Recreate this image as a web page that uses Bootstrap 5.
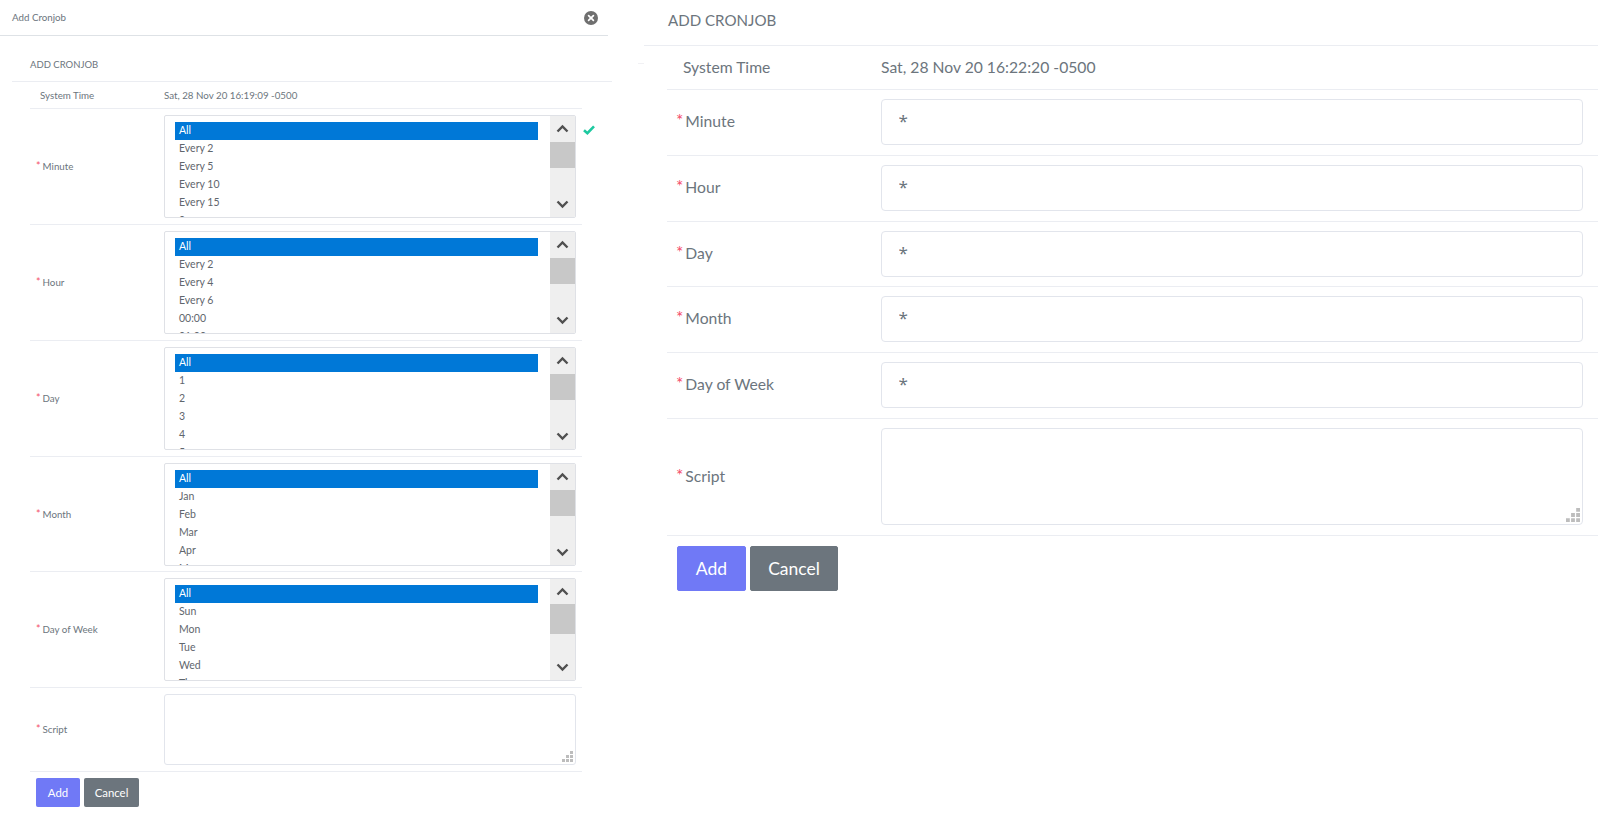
<!DOCTYPE html>
<html lang="en">
<head>
<meta charset="utf-8">
<title>Add Cronjob</title>
<link href="https://cdn.jsdelivr.net/npm/bootstrap@5.3.0/dist/css/bootstrap.min.css" rel="stylesheet">
<style>
html,body{height:813px;overflow:hidden}
body{font-family:Lato,"Noto Sans",sans-serif;color:#6c757d;background:#fff}
.shot-a{width:620px;flex:none;font-size:9.75px}
.shot-b{flex:1;min-width:0;font-size:15.7px}
.modal-bar{width:608px;height:36px;padding:0 10px 0 12px;border-bottom:1px solid #dee2e6}
.close-dot{width:14px;height:14px}
.head-a{margin:0 8px 0 12px;height:46px;padding:12px 0 0 18px;border-bottom:1px solid #ebedf2;font-size:9.5px;line-height:1}
.body-a{margin-left:30px;width:552px}
.line-a{border-bottom:1px solid #ebedf2}
.row-sys-a{height:27px}
.lab-a{width:134px;flex:none;padding-left:6px}
.lab-a.plain{padding-left:10px}
.sel-row{padding:6px 0}
.sel-row.tight{padding-bottom:5px}
.star{color:#f4516c;margin-right:2px;font-size:1.1em;line-height:0}
.fake-select{width:412px;height:103px;flex:none;border:1px solid #dfe1e6;border-radius:2px;overflow:hidden;background:#fff;font-size:10.5px;padding:6px 0 0 10px}
.opts{width:363px;height:96px;overflow:hidden;flex:none}
.opt{height:18px;line-height:16.5px;padding-left:4px;color:#5f666d}
.opt.on{background:#0078d7;color:#fff}
.sbar{width:25px;flex:none;margin:-6px 0 0 auto;background:#efefef}
.sbar svg{display:block;width:13px;height:9px}
.thumb{width:100%;height:26px;background:#c8c8c8;margin-top:9px}
.thumb.big{height:30px;margin-top:8px}
.tick{width:12px;height:10px;margin:10px 0 0 7px;flex:none}
.ta-wrap{width:412px;flex:none}
.ta-a{height:71px;border:1px solid #e2e5ec;border-radius:3px;resize:none}
.grip{position:absolute;right:3px;bottom:3px;width:11px;height:11px}
.btn-add{background:#7079f6;border-color:#7079f6;color:#fff}
.btn-add:hover{background:#7079f6;color:#fff}
.btn-row-a{padding:6px 0 0 6px}
.btn-a{height:29px;font-size:11.4px;line-height:1;padding:0;border-radius:1.5px}
.btn-a.add{width:44px}
.btn-a.can{width:55px}
.gut{width:6px;margin-left:18px;flex:none;margin-top:63px;border-top:1px solid #f1f1f4;height:0}
.main-b{flex:1;min-width:0}
.head-b{height:46px;padding:11px 0 0 24px;border-bottom:1px solid #ebedf2;font-size:15.1px;line-height:18px}
.body-b{margin-left:23px}
.row-sys-b{height:44px}
.lab-b{width:214px;flex:none;padding-left:9px}
.lab-b.plain{padding-left:16px}
.line-b{border-bottom:1px solid #ebedf2}
.inp-row{padding:9px 0 10px}
.inp-row.tight{padding-bottom:9px}
.inp-b{width:702px;height:46px;border:1px solid #e2e5ec;border-radius:4px;padding:0 17px 4px 16.5px;font-family:"Noto Sans",sans-serif;font-size:17px;color:#6c757d;box-shadow:none}
.ta-wrap-b{width:702px;flex:none}
.ta-b{height:97px;border:1px solid #e2e5ec;border-radius:4px;resize:none}
.grip-b{width:14px;height:14px;right:3px;bottom:3px}
.btn-row-b{padding:10px 0 0 10px}
.btn-b{height:45px;font-size:17.5px;line-height:1;padding:0;border-radius:2px}
.btn-b.add{width:69px}
.btn-b.can{width:88px}
</style>
</head>
<body>
<div class="d-flex">
  <section class="shot-a">
    <div class="modal-bar d-flex align-items-center justify-content-between">
      <span>Add Cronjob</span>
      <svg class="close-dot" viewBox="0 0 14 14"><circle cx="7" cy="7" r="7" fill="#6f6f6f"/><path d="M4.6 4.6l4.8 4.8M9.4 4.6l-4.8 4.8" stroke="#fff" stroke-width="1.7" stroke-linecap="round"/></svg>
    </div>
    <div class="head-a d-flex align-items-center pb-0"><span>ADD CRONJOB</span></div>
    <div class="body-a">
      <div class="row-sys-a line-a d-flex align-items-center"><div class="lab-a plain">System Time</div><div>Sat, 28 Nov 20 16:19:09 -0500</div></div>

      <div class="sel-row line-a d-flex align-items-center">
        <div class="lab-a"><span class="star">*</span>Minute</div>
        <div class="fake-select d-flex"><div class="opts"><div class="opt on">All</div><div class="opt">Every 2</div><div class="opt">Every 5</div><div class="opt">Every 10</div><div class="opt">Every 15</div><div class="opt">0</div></div>
          <div class="sbar d-flex flex-column align-items-center"><svg class="mt-2" viewBox="0 0 13 9"><path d="M1.5 7.5l5-5 5 5" fill="none" stroke="#505050" stroke-width="2.4"/></svg><div class="thumb"></div><svg class="mt-auto mb-2" viewBox="0 0 13 9"><path d="M1.5 1.5l5 5 5-5" fill="none" stroke="#505050" stroke-width="2.4"/></svg></div></div>
        <svg class="tick align-self-start" viewBox="0 0 12 10"><path d="M1 5.2l3.4 3L11 1.4" fill="none" stroke="#1dc9a0" stroke-width="2.6"/></svg>
      </div>

      <div class="sel-row line-a d-flex align-items-center">
        <div class="lab-a"><span class="star">*</span>Hour</div>
        <div class="fake-select d-flex"><div class="opts"><div class="opt on">All</div><div class="opt">Every 2</div><div class="opt">Every 4</div><div class="opt">Every 6</div><div class="opt">00:00</div><div class="opt">01:00</div></div>
          <div class="sbar d-flex flex-column align-items-center"><svg class="mt-2" viewBox="0 0 13 9"><path d="M1.5 7.5l5-5 5 5" fill="none" stroke="#505050" stroke-width="2.4"/></svg><div class="thumb"></div><svg class="mt-auto mb-2" viewBox="0 0 13 9"><path d="M1.5 1.5l5 5 5-5" fill="none" stroke="#505050" stroke-width="2.4"/></svg></div></div>
      </div>

      <div class="sel-row line-a d-flex align-items-center">
        <div class="lab-a"><span class="star">*</span>Day</div>
        <div class="fake-select d-flex"><div class="opts"><div class="opt on">All</div><div class="opt">1</div><div class="opt">2</div><div class="opt">3</div><div class="opt">4</div><div class="opt">5</div></div>
          <div class="sbar d-flex flex-column align-items-center"><svg class="mt-2" viewBox="0 0 13 9"><path d="M1.5 7.5l5-5 5 5" fill="none" stroke="#505050" stroke-width="2.4"/></svg><div class="thumb"></div><svg class="mt-auto mb-2" viewBox="0 0 13 9"><path d="M1.5 1.5l5 5 5-5" fill="none" stroke="#505050" stroke-width="2.4"/></svg></div></div>
      </div>

      <div class="sel-row tight line-a d-flex align-items-center">
        <div class="lab-a"><span class="star">*</span>Month</div>
        <div class="fake-select d-flex"><div class="opts"><div class="opt on">All</div><div class="opt">Jan</div><div class="opt">Feb</div><div class="opt">Mar</div><div class="opt">Apr</div><div class="opt">May</div></div>
          <div class="sbar d-flex flex-column align-items-center"><svg class="mt-2" viewBox="0 0 13 9"><path d="M1.5 7.5l5-5 5 5" fill="none" stroke="#505050" stroke-width="2.4"/></svg><div class="thumb"></div><svg class="mt-auto mb-2" viewBox="0 0 13 9"><path d="M1.5 1.5l5 5 5-5" fill="none" stroke="#505050" stroke-width="2.4"/></svg></div></div>
      </div>

      <div class="sel-row line-a d-flex align-items-center">
        <div class="lab-a"><span class="star">*</span>Day of Week</div>
        <div class="fake-select d-flex"><div class="opts"><div class="opt on">All</div><div class="opt">Sun</div><div class="opt">Mon</div><div class="opt">Tue</div><div class="opt">Wed</div><div class="opt">Thu</div></div>
          <div class="sbar d-flex flex-column align-items-center"><svg class="mt-2" viewBox="0 0 13 9"><path d="M1.5 7.5l5-5 5 5" fill="none" stroke="#505050" stroke-width="2.4"/></svg><div class="thumb big"></div><svg class="mt-auto mb-2" viewBox="0 0 13 9"><path d="M1.5 1.5l5 5 5-5" fill="none" stroke="#505050" stroke-width="2.4"/></svg></div></div>
      </div>

      <div class="sel-row line-a d-flex align-items-center">
        <div class="lab-a"><span class="star">*</span>Script</div>
        <div class="ta-wrap position-relative"><textarea class="form-control ta-a" aria-label="Script"></textarea>
          <svg class="grip" viewBox="0 0 11 11" fill="#bdbdbd"><path d="M8 0h3v3H8zM4 4h3v3H4zM8 4h3v3H8zM0 8h3v3H0zM4 8h3v3H4zM8 8h3v3H8z"/></svg></div>
      </div>

      <div class="btn-row-a d-flex gap-1"><button class="btn btn-add btn-a add" type="button">Add</button><button class="btn btn-secondary btn-a can" type="button">Cancel</button></div>
    </div>
  </section>

  <section class="shot-b d-flex">
    <div class="gut"></div>
    <div class="main-b">
      <div class="head-b">ADD CRONJOB</div>
      <div class="body-b">
        <div class="row-sys-b line-b d-flex align-items-center"><div class="lab-b plain">System Time</div><div>Sat, 28 Nov 20 16:22:20 -0500</div></div>
        <div class="inp-row line-b d-flex align-items-center"><div class="lab-b"><span class="star">*</span>Minute</div><input class="form-control inp-b" value="*" aria-label="Minute"></div>
        <div class="inp-row line-b d-flex align-items-center"><div class="lab-b"><span class="star">*</span>Hour</div><input class="form-control inp-b" value="*" aria-label="Hour"></div>
        <div class="inp-row tight line-b d-flex align-items-center"><div class="lab-b"><span class="star">*</span>Day</div><input class="form-control inp-b" value="*" aria-label="Day"></div>
        <div class="inp-row line-b d-flex align-items-center"><div class="lab-b"><span class="star">*</span>Month</div><input class="form-control inp-b" value="*" aria-label="Month"></div>
        <div class="inp-row line-b d-flex align-items-center"><div class="lab-b"><span class="star">*</span>Day of Week</div><input class="form-control inp-b" value="*" aria-label="Day of Week"></div>
        <div class="inp-row line-b d-flex align-items-center"><div class="lab-b"><span class="star">*</span>Script</div>
          <div class="ta-wrap-b position-relative"><textarea class="form-control ta-b" aria-label="Script"></textarea>
            <svg class="grip grip-b" viewBox="0 0 11 11" fill="#bdbdbd"><path d="M8 0h3v3H8zM4 4h3v3H4zM8 4h3v3H8zM0 8h3v3H0zM4 8h3v3H4zM8 8h3v3H8z"/></svg></div></div>
        <div class="btn-row-b d-flex gap-1"><button class="btn btn-add btn-b add" type="button">Add</button><button class="btn btn-secondary btn-b can" type="button">Cancel</button></div>
      </div>
    </div>
  </section>
</div>
<script src="https://cdn.jsdelivr.net/npm/bootstrap@5.3.0/dist/js/bootstrap.bundle.min.js"></script>
</body>
</html>
